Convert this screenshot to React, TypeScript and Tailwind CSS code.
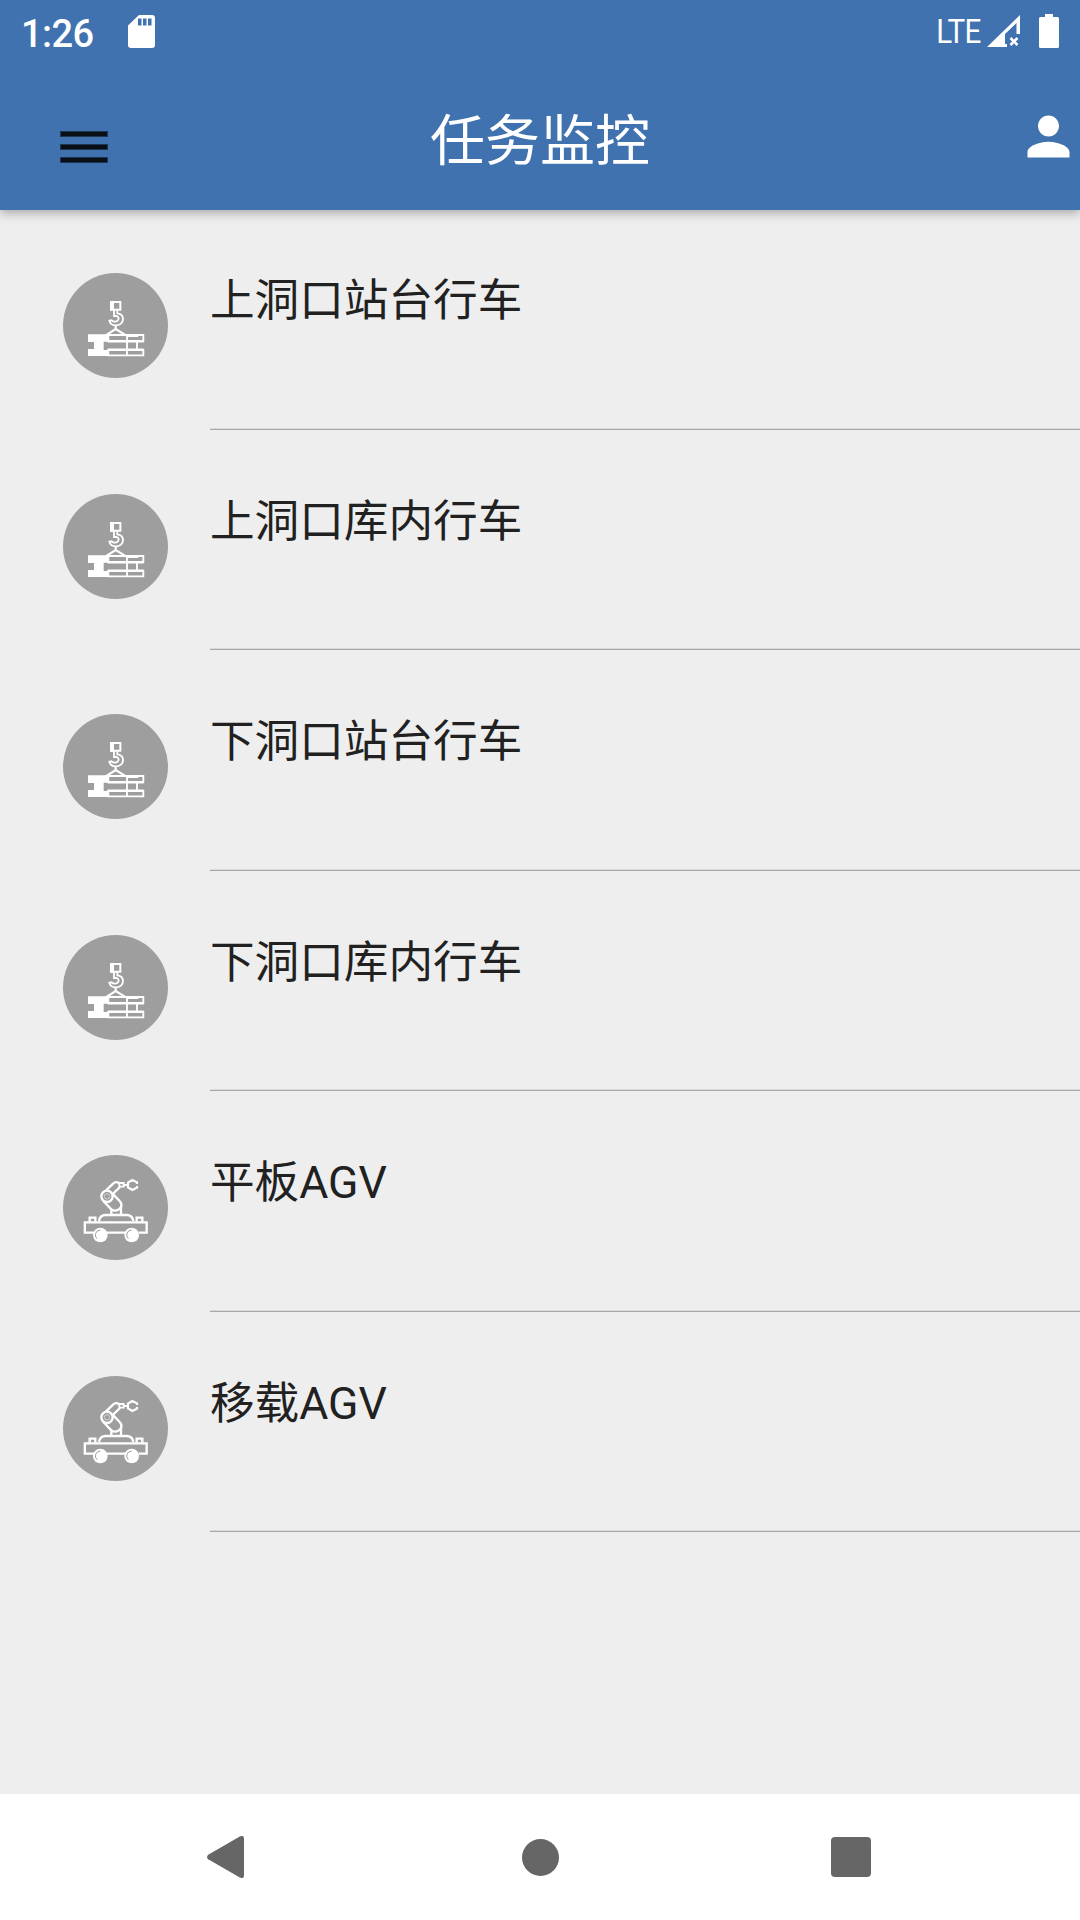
import React from "react";

const items = [
  { label: "上洞口站台行车", kind: "crane" },
  { label: "上洞口库内行车", kind: "crane" },
  { label: "下洞口站台行车", kind: "crane" },
  { label: "下洞口库内行车", kind: "crane" },
  { label: "平板AGV", kind: "agv" },
  { label: "移载AGV", kind: "agv" },
];

function CraneIcon() {
  return (
    <svg viewBox="24 24 315 315" className="size-[105px]" fill="none" stroke="white" strokeWidth="6">
      <path d="M168 111h28v23h-28z" />
      <path d="M165 108h12v29h-12z" fill="white" stroke="none" />
      <path d="M177 136v17h8c5 2 7 6 5 11-3 7-14 8-20 2l-7 1c2 10 10 14 19 14 13 0 22-8 22-18 0-11-8-17-17-18v-9" strokeWidth="5.5" />
      <path d="M182 180v12M152 211l30-19 31 19" strokeWidth="6.5" />
      <path d="M99 208h62v22h-15v25h15v18H99v-21h18v-21H99z" fill="white" stroke="none" />
      <path d="M160 210h105v18H160zM160 255h105v16H160z" strokeWidth="5.5" />
      <path d="M216 208v64M246 229v26" strokeWidth="5.5" />
      <path d="M158 229h108M158 254h108" strokeWidth="6.5" />
      <path d="M216 209h34v7h-34z" fill="white" stroke="none" />
    </svg>
  );
}

function AgvIcon() {
  return (
    <svg viewBox="24 30 315 315" className="size-[105px]" fill="none" stroke="white" strokeWidth="7">
      <path d="M118 263H89.500v-31H275v31h-24M156 263h57" />
      <path d="M104 230v-12h17v12M245 230v-12h17v12M132 228c2-11 9-18 20-18h63c11 0 18 7 20 18" />
      <path d="M169 209v-18M198 209v-25" />
      <circle cx="156" cy="154" r="17" />
      <circle cx="156" cy="154" r="8" strokeWidth="3" strokeOpacity="0.5" />
      <path d="M153 136l22-21q5-5 12-3l9 3M172 148l23-22M145 168l24 25c10 8 24 3 29-7 3-7 1-13-4-18l-22-23" />
      <path d="M193 114h13v11h-13zM206 120h13" strokeWidth="5.5" />
      <path d="M246 117v-5l-14-7-13 8v14l13 8 14-7v-5" strokeWidth="6.5" />
      <circle cx="136" cy="270" r="22" fill="white" stroke="none" />
      <circle cx="230" cy="270" r="22" fill="white" stroke="none" />
      <path d="M136 255a15 15 0 0 0-10 26M230 255a15 15 0 0 0-10 26" stroke="#9e9e9e" strokeWidth="3" />
    </svg>
  );
}

function StatusBar() {
  return (
    <div className="flex h-[63px] shrink-0 items-start">
      <span className="ml-[21px] mt-[12px] w-[106px] text-[38px] font-medium leading-[44px] tracking-[-0.6px]">1:26</span>
      <svg viewBox="0 0 27 33" className="ml-[0.5px] mt-[15px] h-[33px] w-[27px]">
        <path
          fill="white"
          fillRule="evenodd"
          d="M11 0h13a3 3 0 0 1 3 3v27a3 3 0 0 1-3 3H3a3 3 0 0 1-3-3V10.500zM10 3.500v7h3.500v-7zM15 3.500v7h3.500v-7zM20 3.500v7h3.500v-7z"
        />
      </svg>
      <span className="ml-auto mt-[11.5px] origin-right scale-x-[0.91] text-[32.500px] leading-[40px] tracking-[-0.8px]">LTE</span>
      <svg viewBox="0 0 33 33" className="ml-[6px] mt-[15px] size-[33px]">
        <path fill="white" fillRule="evenodd" d="M33 0v19h-3.500V8L18 19v10h2v3H0z" />
        <path d="M23.500 23l7 7M30.500 23l-7 7" stroke="white" strokeWidth="2.600" />
      </svg>
      <svg viewBox="0 0 20 34" className="ml-[19px] mr-[21px] mt-[14px] h-[34px] w-[20px]">
        <path fill="white" d="M6 0h8v3h4.500Q20 3 20 4.500v28q0 1.500-1.500 1.500h-17Q0 34 0 32.500v-28Q0 3 1.500 3H6z" />
      </svg>
    </div>
  );
}

function MenuBar() {
  return <span className="h-[6px] w-[48px] border border-[#1e3550] bg-[#080f17]" />;
}

export default function App() {
  return (
    <div className="flex h-[1920px] w-[1080px] flex-col overflow-hidden bg-[#eeeeee] font-['Roboto','Noto_Sans_CJK_SC',sans-serif]">
      <header className="z-10 flex h-[210px] shrink-0 flex-col bg-[#4072af] text-white shadow-[0_3px_10px_rgba(0,0,0,0.3)]">
        <StatusBar />
        <div className="grid grid-cols-[1fr_auto_1fr] items-start">
          <button className="ml-[60px] mt-[68px] flex w-[48px] flex-col gap-[7px]" aria-label="菜单">
            <MenuBar />
            <MenuBar />
            <MenuBar />
          </button>
          <h1 className="mt-[38px] text-[55px] font-normal leading-[80px]">任务监控</h1>
          <svg viewBox="0 0 24 24" className="mt-[42px] size-[63px] justify-self-end" fill="white">
            <path d="M12 12c2.210 0 4-1.790 4-4s-1.790-4-4-4-4 1.790-4 4 1.790 4 4 4zm0 2c-2.670 0-8 1.340-8 4v2h16v-2c0-2.660-5.330-4-8-4z" />
          </svg>
        </div>
      </header>
      <main className="flex-1">
        <ul>
          {items.map((item) => (
            <li key={item.label} className="flex h-[220.5px] pl-[63px]">
              <div className="mt-[63px] size-[105px] shrink-0 rounded-full bg-[#9e9e9e]">
                {item.kind === "crane" ? <CraneIcon /> : <AgvIcon />}
              </div>
              <div className="ml-[42px] h-[219.75px] flex-1 border-b border-[#a8a8a8] pt-[58px] text-[44.625px] leading-[66px] text-[#212121] shadow-[inset_0_-1px_0_#dadada]">
                {item.label}
              </div>
            </li>
          ))}
        </ul>
      </main>
      <nav className="flex h-[126px] shrink-0 items-center bg-white pl-[207px]">
        <svg viewBox="0 0 37 42" className="h-[42px] w-[37px]">
          <path fill="#666666" d="M1.200 18.700L32.800.5Q37-1.300 37 2.800v36.400q0 4.100-4.200 2.300L1.200 23.300Q-1.200 21 1.200 18.700z" />
        </svg>
        <span className="ml-[277.5px] size-[37px] rounded-full bg-[#666666]" />
        <span className="ml-[272.5px] size-[40px] rounded-[4px] bg-[#666666]" />
      </nav>
    </div>
  );
}
